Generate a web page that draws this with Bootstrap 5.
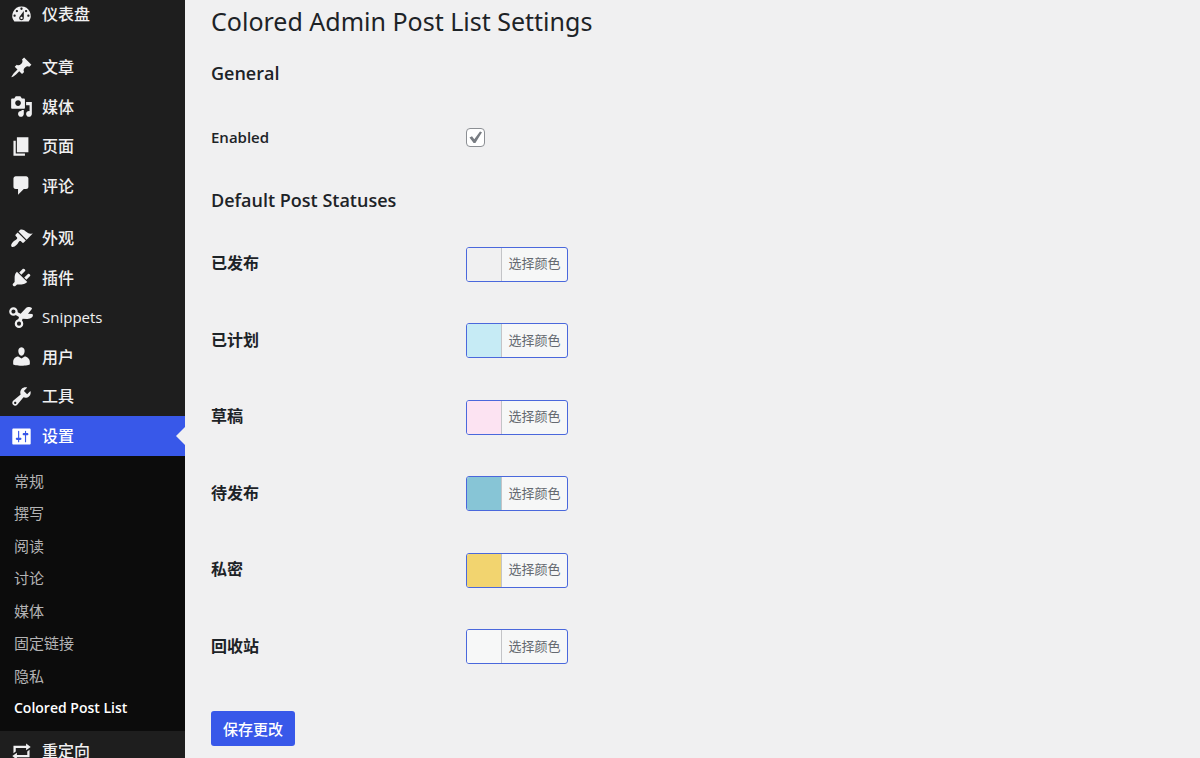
<!DOCTYPE html>
<html lang="zh-CN">
<head>
<meta charset="utf-8">
<meta name="viewport" content="width=device-width, initial-scale=1">
<title>Colored Admin Post List Settings</title>
<link href="https://cdn.jsdelivr.net/npm/bootstrap@5.3.0/dist/css/bootstrap.min.css" rel="stylesheet">
<style>
  body { font-family: "Open Sans", "Noto Sans CJK SC", sans-serif; background: #f0f0f1; color: #1d2327; }
  .admin-menu { width: 185px; background: #1e1e1e; }
  .menu-list { margin-top: -6px; }
  .menu-list a { height: 40px; padding-left: 10px; gap: 9px; font-size: 16px; line-height: 24px; font-weight: 500; color: #f0f0f1; }
  .menu-group { margin-bottom: 13px; }
  .menu-group > li:nth-child(even) > a { height: 39px; }
  .menu-list .menu-group > li > a.current { height: 40px; background: #3858e9; color: #fff; }
  .menu-list a.latin { font-size: 15px; font-weight: 400; }
  .current::after { content: ""; position: absolute; right: 0; top: 50%; transform: translateY(-50%); border: 9px solid transparent; border-right-color: #f0f0f1; border-left: 0; }
  .menu-icon { width: 23px; height: 23px; fill: currentColor; overflow: visible; }
  .submenu { background: #0c0c0c; padding: 8px 0 7px; }
  .submenu li > a { height: 33px; padding-left: 14px; font-size: 15px; font-weight: 400; color: #b4b4b5; }
  .submenu li:nth-child(even) > a { height: 32px; }
  .submenu li > a.chosen { color: #fff; font-weight: 600; font-size: 14px; }
  .settings-page { padding: 4px 26px 12px; }
  h1 { font-family: "Noto Sans", sans-serif; font-size: 25px; line-height: 34px; font-weight: 400; margin-bottom: 22px; }
  h2 { font-size: 18px; line-height: 26px; font-weight: 600; margin-bottom: 13px; }
  .general { margin-bottom: 11px; }
  .field { height: 76px; }
  .field.tall { height: 77px; }
  .field-name { width: 255px; padding-bottom: 2px; font-size: 16px; line-height: 24px; font-weight: 700; }
  .field-name.latin { font-size: 15px; font-weight: 600; }
  .form-check-input.enable-box { width: 19px; height: 19px; margin: 0; border: 1px solid #8c8f94; border-radius: 4px; opacity: 1; background-color: #fff; }
  .enable-box:checked { background-size: 17px 17px; background-image: url("data:image/svg+xml,%3Csvg xmlns='http://www.w3.org/2000/svg' viewBox='0 0 17 17'%3E%3Cpath d='M2.500 8.500 5 7.200l2.300 3L13 2.500l2 .8L8.400 14H6.600z' fill='%23787c82'/%3E%3C/svg%3E"); }
  .color-btn { width: 102px; height: 35px; border: 1px solid #4a68dc; border-radius: 3px; background: #f6f7f7; font-size: 13px; color: #646970; }
  .swatch { width: 35px; border-right: 1px solid #c3c4c7; }
  .save-btn { --bs-btn-bg: #3858e9; --bs-btn-border-color: #3858e9; height: 35px; margin-top: 26px; padding: 0 12px; border: 0; border-radius: 3px; font-size: 15px; line-height: 24px; font-weight: 500; }
</style>
</head>
<body>
<div class="d-flex vh-100 overflow-hidden">
  <nav class="admin-menu flex-shrink-0 overflow-hidden" aria-label="主菜单">
    <div class="menu-list">
      <ul class="menu-group list-unstyled">
        <li><a href="#" class="d-flex align-items-center text-decoration-none"><svg class="menu-icon" viewBox="0 0 20 20"><path fill-rule="evenodd" d="M3.76 16h12.48A7.998 7.998 0 0 0 10 3a7.998 7.998 0 0 0-6.24 13zM10 4c.55 0 1 .45 1 1s-.45 1-1 1-1-.45-1-1 .45-1 1-1zM6 6c.55 0 1 .45 1 1s-.45 1-1 1-1-.45-1-1 .45-1 1-1zm8 0c.55 0 1 .45 1 1s-.45 1-1 1-1-.45-1-1 .45-1 1-1zm-5.37 5.55L12 7v6c0 1.1-.9 2-2 2s-2-.9-2-2c0-.57.24-1.08.63-1.45zM4 10c.55 0 1 .45 1 1s-.45 1-1 1-1-.45-1-1 .45-1 1-1zm12 0c.55 0 1 .45 1 1s-.45 1-1 1-1-.45-1-1 .45-1 1-1zm-5 3c0-.55-.45-1-1-1s-1 .45-1 1 .45 1 1 1 1-.45 1-1z"/></svg>仪表盘</a></li>
      </ul>
      <ul class="menu-group list-unstyled">
        <li><a href="#" class="d-flex align-items-center text-decoration-none"><svg class="menu-icon" viewBox="0 0 20 20"><path d="M10.44 3.02l1.82-1.82 6.36 6.35-1.83 1.82c-1.05-.68-2.48-.57-3.41.36l-.75.75c-.92.93-1.04 2.35-.35 3.41l-1.83 1.82-2.41-2.41-2.8 2.79c-.42.42-3.38 2.71-3.8 2.29s1.86-3.39 2.28-3.81l2.79-2.79L4.1 9.36l1.83-1.82c1.05.69 2.48.57 3.4-.36l.75-.75c.93-.92 1.05-2.35.36-3.41z"/></svg>文章</a></li>
        <li><a href="#" class="d-flex align-items-center text-decoration-none"><svg class="menu-icon" viewBox="0 0 20 20"><path fill-rule="evenodd" d="M13 11V4c0-.55-.45-1-1-1h-1.67L9 1H5L3.67 3H2c-.55 0-1 .45-1 1v7c0 .55.45 1 1 1h10c.55 0 1-.45 1-1zM7 4.5c1.38 0 2.5 1.12 2.5 2.5S8.38 9.5 7 9.5 4.5 8.38 4.5 7 5.62 4.5 7 4.5zM14 6h5v10.5c0 1.38-1.12 2.5-2.5 2.5S14 17.88 14 16.5s1.12-2.5 2.5-2.5c.17 0 .34.02.5.05V9h-3V6zm-4 8.05V13h2v3.5c0 1.38-1.12 2.5-2.5 2.5S7 17.88 7 16.5 8.12 14 9.5 14c.17 0 .34.02.5.05z"/></svg>媒体</a></li>
        <li><a href="#" class="d-flex align-items-center text-decoration-none"><svg class="menu-icon" viewBox="0 0 20 20"><path d="M6 15V2h10v13H6zm-1 1h8v2H3V5h2v11z"/></svg>页面</a></li>
        <li><a href="#" class="d-flex align-items-center text-decoration-none"><svg class="menu-icon" viewBox="0 0 20 20"><path d="M5 2h9c1.1 0 2 .9 2 2v7c0 1.1-.9 2-2 2h-2l-5 5v-5H5c-1.1 0-2-.9-2-2V4c0-1.1.9-2 2-2z"/></svg>评论</a></li>
      </ul>
      <ul class="menu-group list-unstyled">
        <li><a href="#" class="d-flex align-items-center text-decoration-none"><svg class="menu-icon" viewBox="0 0 20 20"><path d="M14.48 11.06L7.41 3.99l1.5-1.5c.5-.56 2.3-.47 3.51.32 1.21.8 1.43 1.28 2.91 2.1 1.18.64 2.45 1.26 4.45.85zm-.71.71L6.7 4.7 4.93 6.47c-.39.39-.39 1.02 0 1.41l1.06 1.06c.39.39.39 1.03 0 1.42-.6.6-1.43 1.11-2.21 1.69-.35.26-.7.53-1.01.84C1.43 14.23.4 16.08 1.4 17.07c.99 1 2.84-.03 4.18-1.36.31-.31.58-.66.85-1.02.57-.78 1.08-1.61 1.69-2.21.39-.39 1.02-.39 1.41 0l1.06 1.06c.39.39 1.02.39 1.41 0z"/></svg>外观</a></li>
        <li><a href="#" class="d-flex align-items-center text-decoration-none"><svg class="menu-icon" viewBox="0 0 20 20"><path d="M13.11 4.36L9.87 7.6 8 5.73l3.24-3.24c.35-.34 1.05-.2 1.56.32.52.51.66 1.21.31 1.55zm-8 1.77l.91-1.12 9.01 9.01-1.19.84c-.71.71-2.63 1.16-3.82 1.16H6.14L4.9 17.26c-.59.59-1.54.59-2.12 0-.59-.58-.59-1.53 0-2.12l1.24-1.24v-3.88c0-1.13.4-3.19 1.09-3.89zm7.26 3.97l3.24-3.24c.34-.35 1.04-.21 1.55.31.52.51.66 1.21.31 1.55l-3.24 3.25z"/></svg>插件</a></li>
        <li><a href="#" class="latin d-flex align-items-center text-decoration-none"><svg class="menu-icon" viewBox="0 0 24 24"><g fill="none" stroke="currentColor" stroke-width="2.300"><circle cx="3.600" cy="5.700" r="3.300"/><circle cx="9.400" cy="18.400" r="3.300"/></g><path d="M6.500 5.800L11.100 8 16.700 2.100C18 .9 19.200.8 20.200 1 21.700 1.200 22.800 1.900 23 2.800L18.800 8l4.500.4c1 1 .7 2.600-.3 3.400-1.400 1.200-3 1.800-5 1.800l-4.800-.4-1.400 3.200-3.400-1.800 1-3.100-3.500-2.100z"/></svg>Snippets</a></li>
        <li><a href="#" class="d-flex align-items-center text-decoration-none"><svg class="menu-icon" viewBox="0 0 20 20"><path d="M10 9.25c-2.27 0-2.73-3.44-2.73-3.44C7 4.02 7.82 2 9.97 2c2.16 0 2.98 2.02 2.71 3.81 0 0-.41 3.44-2.68 3.44zm0 2.57L12.72 10c2.39 0 4.52 2.33 4.52 4.53v2.49s-3.65 1.13-7.24 1.13c-3.65 0-7.24-1.13-7.24-1.13v-2.49c0-2.25 1.94-4.48 4.47-4.48z"/></svg>用户</a></li>
        <li><a href="#" class="d-flex align-items-center text-decoration-none"><svg class="menu-icon" viewBox="0 0 20 20"><path fill-rule="evenodd" d="M16.68 9.77c-1.34 1.34-3.3 1.67-4.95.99l-5.41 6.52c-.99.99-2.59.99-3.58 0s-.99-2.59 0-3.57l6.52-5.42c-.68-1.65-.35-3.61.99-4.95 1.28-1.28 3.12-1.62 4.72-1.06l-2.89 2.89 2.82 2.82 2.86-2.87c.53 1.58.18 3.39-1.08 4.65zM3.81 16.21c.4.39 1.04.39 1.43 0 .4-.4.4-1.04 0-1.43-.39-.4-1.03-.4-1.43 0-.39.39-.39 1.03 0 1.43z"/></svg>工具</a></li>
        <li><a href="#" class="current position-relative d-flex align-items-center text-decoration-none" aria-current="true"><svg class="menu-icon" viewBox="0 0 20 20"><path fill-rule="evenodd" d="M18 16V4c0-.55-.45-1-1-1H3c-.55 0-1 .45-1 1v12c0 .55.45 1 1 1h14c.55 0 1-.45 1-1zM8 11h1c.55 0 1 .45 1 1s-.45 1-1 1H8v1.500c0 .28-.22.5-.5.5s-.5-.22-.5-.5V13H6c-.55 0-1-.45-1-1s.45-1 1-1h1V5.500c0-.28.22-.5.5-.5s.5.22.5.5V11zm5-2h-1c-.55 0-1-.45-1-1s.45-1 1-1h1V5.500c0-.28.22-.5.5-.5s.5.22.5.5V7h1c.55 0 1 .45 1 1s-.45 1-1 1h-1v5.500c0 .28-.22.5-.5.5s-.5-.22-.5-.5V9z"/></svg>设置</a>
          <ul class="submenu list-unstyled">
            <li><a href="#" class="d-flex align-items-center text-decoration-none">常规</a></li>
            <li><a href="#" class="d-flex align-items-center text-decoration-none">撰写</a></li>
            <li><a href="#" class="d-flex align-items-center text-decoration-none">阅读</a></li>
            <li><a href="#" class="d-flex align-items-center text-decoration-none">讨论</a></li>
            <li><a href="#" class="d-flex align-items-center text-decoration-none">媒体</a></li>
            <li><a href="#" class="d-flex align-items-center text-decoration-none">固定链接</a></li>
            <li><a href="#" class="d-flex align-items-center text-decoration-none">隐私</a></li>
            <li><a href="#" class="chosen d-flex align-items-center text-decoration-none" aria-current="page">Colored Post List</a></li>
          </ul>
        </li>
        <li><a href="#" class="d-flex align-items-center text-decoration-none"><svg class="menu-icon" viewBox="0 0 20 20"><path d="M5 7v3l-2 1.500V5h11V3l4 3.010L14 9V7H5zm10 6v-3l2-1.500V15H6v2l-4-3.010L6 11v2h9z"/></svg>重定向</a></li>
      </ul>
    </div>
  </nav>

  <main class="settings-page flex-grow-1">
    <h1>Colored Admin Post List Settings</h1>
    <form>
      <h2>General</h2>
      <div class="field tall general d-flex align-items-center">
        <label class="field-name latin" for="enabled">Enabled</label>
        <input class="form-check-input enable-box" type="checkbox" id="enabled" checked>
      </div>
      <h2>Default Post Statuses</h2>
      <div class="field d-flex align-items-center"><label class="field-name" for="c1">已发布</label><button type="button" id="c1" class="color-btn d-flex p-0 overflow-hidden"><span class="swatch h-100" style="background:#f0f0f1"></span><span class="flex-fill align-self-center">选择颜色</span></button></div>
      <div class="field tall d-flex align-items-center"><label class="field-name" for="c2">已计划</label><button type="button" id="c2" class="color-btn d-flex p-0 overflow-hidden"><span class="swatch h-100" style="background:#c6ebf5"></span><span class="flex-fill align-self-center">选择颜色</span></button></div>
      <div class="field d-flex align-items-center"><label class="field-name" for="c3">草稿</label><button type="button" id="c3" class="color-btn d-flex p-0 overflow-hidden"><span class="swatch h-100" style="background:#fce3f2"></span><span class="flex-fill align-self-center">选择颜色</span></button></div>
      <div class="field tall d-flex align-items-center"><label class="field-name" for="c4">待发布</label><button type="button" id="c4" class="color-btn d-flex p-0 overflow-hidden"><span class="swatch h-100" style="background:#87c5d6"></span><span class="flex-fill align-self-center">选择颜色</span></button></div>
      <div class="field d-flex align-items-center"><label class="field-name" for="c5">私密</label><button type="button" id="c5" class="color-btn d-flex p-0 overflow-hidden"><span class="swatch h-100" style="background:#f2d46f"></span><span class="flex-fill align-self-center">选择颜色</span></button></div>
      <div class="field tall d-flex align-items-center"><label class="field-name" for="c6">回收站</label><button type="button" id="c6" class="color-btn d-flex p-0 overflow-hidden"><span class="swatch h-100" style="background:#f7f8f8"></span><span class="flex-fill align-self-center">选择颜色</span></button></div>
      <button type="submit" class="btn btn-primary save-btn">保存更改</button>
    </form>
  </main>
</div>
<script src="https://cdn.jsdelivr.net/npm/bootstrap@5.3.0/dist/js/bootstrap.bundle.min.js"></script>
</body>
</html>
